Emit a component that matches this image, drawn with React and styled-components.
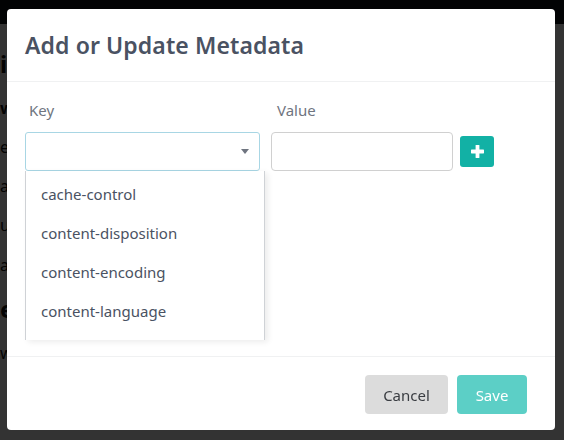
import React from "react";
import styled, { createGlobalStyle } from "styled-components";

const GlobalStyle = createGlobalStyle`
  html, body {
    margin: 0;
    padding: 0;
    width: 564px;
    height: 440px;
    overflow: hidden;
    background: #ffffff;
    font-family: "Noto Sans", "Open Sans", sans-serif;
  }
`;

const Page = styled.div`
  width: 564px;
  height: 440px;
  overflow: hidden;
  background: #ffffff;
`;

const TopBar = styled.div`
  height: 24px;
  background: #0c0f16;
`;

const PageBody = styled.div`
  display: flex;
  flex-direction: column;
  gap: 20px;
  padding: 26px 0 0 0;
  color: #111;
`;

const PageLine = styled.div`
  font-weight: ${(p) => (p.$bold ? 700 : 400)};
  font-size: ${(p) => (p.$big ? "24px" : "16px")};
  line-height: 1.2;
  white-space: nowrap;
`;

const Overlay = styled.div`
  position: fixed;
  inset: 0;
  background: rgba(0, 0, 0, 0.8);
  display: flex;
  padding: 9px 9px 10px 7px;
`;

const Modal = styled.div`
  flex: 1;
  display: flex;
  flex-direction: column;
  background: #ffffff;
  border-radius: 4px;
`;

const Header = styled.div`
  height: 72px;
  display: flex;
  align-items: center;
  padding: 0 18px;
  border-bottom: 1px solid #f0f1f2;
`;

const Title = styled.h2`
  margin: 0;
  font-size: 23px;
  font-weight: 600;
  color: #4a5262;
  letter-spacing: 0.1px;
`;

const Body = styled.div`
  flex: 1;
  padding: 18px 18px 0 18px;
`;

const Row = styled.div`
  display: flex;
  align-items: flex-end;
`;

const Field = styled.div`
  display: flex;
  flex-direction: column;
  width: ${(p) => p.$width}px;
  margin-right: ${(p) => p.$gap}px;
  position: relative;
`;

const Label = styled.label`
  height: 20px;
  line-height: 20px;
  padding-left: ${(p) => p.$indent}px;
  margin-bottom: 12px;
  font-size: 15px;
  color: #6f7580;
`;

const SelectBox = styled.div`
  height: 39px;
  box-sizing: border-box;
  border: 1px solid #a8d6e4;
  border-radius: 3px;
  display: flex;
  align-items: center;
  justify-content: flex-end;
  padding-right: 10px;
`;

const Caret = styled.span`
  width: 0;
  height: 0;
  border-left: 4.5px solid transparent;
  border-right: 4.5px solid transparent;
  border-top: 5px solid #6f7580;
`;

const Input = styled.input`
  height: 39px;
  box-sizing: border-box;
  border: 1px solid #d0d0d0;
  border-radius: 4px;
  outline: none;
  padding: 0 10px;
  font-size: 15px;
`;

const AddButton = styled.button`
  width: 34px;
  height: 31px;
  margin-bottom: 4px;
  border: none;
  border-radius: 3px;
  background: #12b1a5;
  display: flex;
  align-items: center;
  justify-content: center;
  padding: 0;
`;

const Menu = styled.div`
  position: absolute;
  top: 100%;
  left: 0;
  width: 240px;
  height: 169px;
  box-sizing: border-box;
  overflow: hidden;
  background: #ffffff;
  border: 1px solid #cfd2d6;
  border-top: none;
  border-bottom: none;
  padding-top: 4px;
  box-shadow: 3px 2px 6px rgba(0, 0, 0, 0.08);
  z-index: 2;
`;

const MenuItem = styled.div`
  height: 39px;
  line-height: 39px;
  padding-left: 15px;
  font-size: 15px;
  color: #4a5262;
`;

const Footer = styled.div`
  height: 73px;
  border-top: 1px solid #f0f1f2;
  display: flex;
  align-items: center;
  justify-content: flex-end;
  gap: 9px;
  padding-right: 28px;
`;

const Button = styled.button`
  height: 39px;
  width: ${(p) => p.$width}px;
  border: none;
  border-radius: 4px;
  font-family: inherit;
  font-size: 15px;
  background: ${(p) => (p.$primary ? "#5ccfc6" : "#dcdcdc")};
  color: ${(p) => (p.$primary ? "#ffffff" : "#3a3d42")};
  margin-top: 2px;
`;

const keys = [
  "cache-control",
  "content-disposition",
  "content-encoding",
  "content-language",
];

function PlusIcon() {
  return (
    <svg width="13" height="13" viewBox="0 0 13 13">
      <rect x="4.6" y="0" width="3.8" height="13" rx="0.6" fill="#fff" />
      <rect x="0" y="4.6" width="13" height="3.8" rx="0.6" fill="#fff" />
    </svg>
  );
}

function App() {
  return (
    <>
      <GlobalStyle />
      <Page>
        <TopBar />
        <PageBody>
          <PageLine $big $bold>
            i
          </PageLine>
          <PageLine $bold>w</PageLine>
          <PageLine>e</PageLine>
          <PageLine>ag</PageLine>
          <PageLine>u</PageLine>
          <PageLine>as</PageLine>
          <PageLine $bold $big>
            e
          </PageLine>
          <PageLine>w</PageLine>
        </PageBody>
      </Page>
      <Overlay>
        <Modal>
          <Header>
            <Title>Add or Update Metadata</Title>
          </Header>
          <Body>
            <Row>
              <Field $width={235} $gap={11}>
                <Label $indent={4}>Key</Label>
                <SelectBox>
                  <Caret />
                </SelectBox>
                <Menu>
                  {keys.map((k) => (
                    <MenuItem key={k}>{k}</MenuItem>
                  ))}
                </Menu>
              </Field>
              <Field $width={182} $gap={7}>
                <Label $indent={6}>Value</Label>
                <Input />
              </Field>
              <AddButton>
                <PlusIcon />
              </AddButton>
            </Row>
          </Body>
          <Footer>
            <Button $width={83}>Cancel</Button>
            <Button $width={70} $primary>
              Save
            </Button>
          </Footer>
        </Modal>
      </Overlay>
    </>
  );
}

export default App;
